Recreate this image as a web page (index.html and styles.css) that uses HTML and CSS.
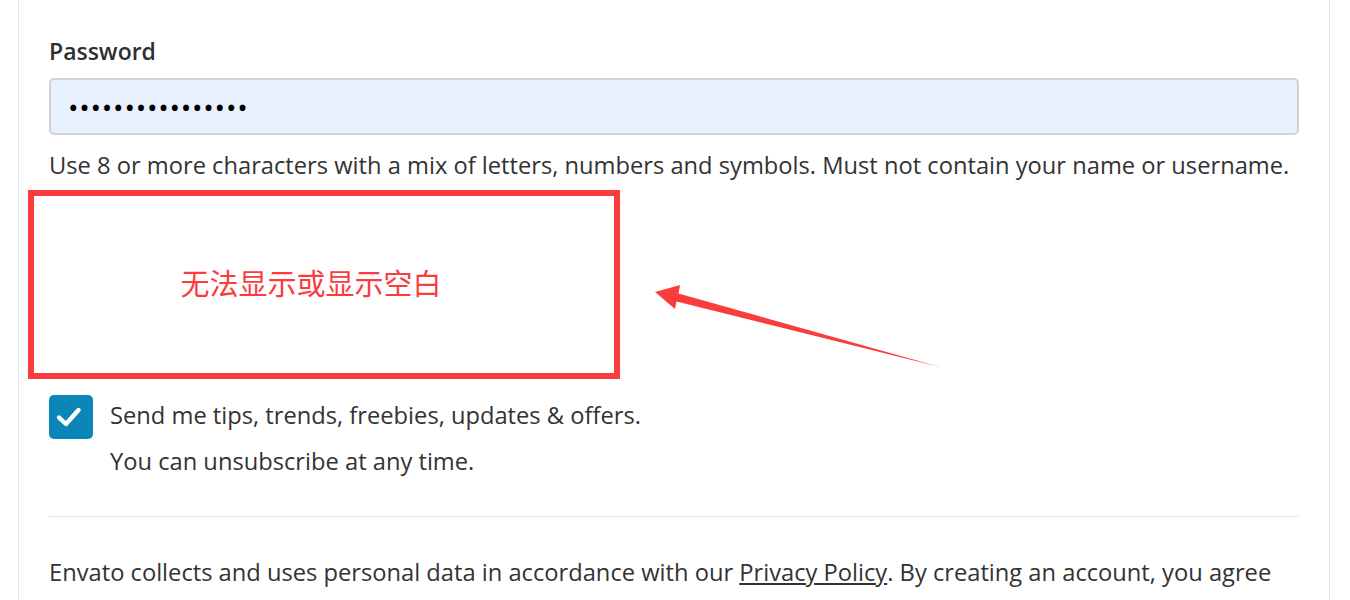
FILE: index.html
```html
<!DOCTYPE html>
<html lang="en">
<head>
<meta charset="UTF-8">
<meta name="viewport" content="width=device-width, initial-scale=1.0">
<title>Create account</title>
<link rel="stylesheet" href="styles.css">
</head>
<body>

<div class="page">
    <div class="card">
        <label class="field-label" for="password">Password</label>
        <input type="text" id="password" class="field-input" value="••••••••••••••••">
        <p class="field-hint">Use 8 or more characters with a mix of letters, numbers and symbols. Must not contain your name or username.</p>

        <!-- annotation: this area renders blank -->
        <div class="note-box">
            <span class="note-text">无法显示或显示空白</span>
        </div>

        <div class="opt-in">
            <span class="check-box">
                <svg width="44" height="44" viewBox="0 0 44 44"><path d="M10 22.5 L17 29 L29.5 15" fill="none" stroke="#fff" stroke-width="4.4" stroke-linecap="round" stroke-linejoin="round"/></svg>
            </span>
            <div class="opt-in-text">
                <p>Send me tips, trends, freebies, updates &amp; offers.</p>
                <p>You can unsubscribe at any time.</p>
            </div>
        </div>

        <hr class="divider">

        <p class="legal">Envato collects and uses personal data in accordance with our <a href="#">Privacy Policy</a>. By creating an account, you agree</p>
    </div>

    <svg class="note-arrow" width="1350" height="600" viewBox="0 0 1350 600">
        <polygon points="655,292 680,285 678.5,293.6 940,367 676.5,301.4 675,309" fill="#fa3c3c"/>
    </svg>
</div>

</body>
</html>
```

FILE: styles.css
```css
/* Global styles */
body {
    font-family: "Open Sans", "Noto Sans", Arial, sans-serif;
    margin: 0;
    padding: 0;
    color: #333;
    background: #fff;
}
.page {
    position: relative;
    height: 600px;
    overflow: hidden;
}
.card {
    margin-left: 18px;
    width: 1250px;
    padding: 36px 30px 0 30px;
    border-left: 1px solid #e4e8eb;
    border-right: 1px solid #e4e8eb;
    height: 600px;
}
.field-label {
    display: block;
    font-size: 23px;
    font-weight: 600;
    line-height: 30px;
    color: #2f2f2f;
}
.field-input {
    display: block;
    box-sizing: border-box;
    width: 100%;
    height: 57px;
    margin-top: 12px;
    padding: 0 17px;
    border: 2px solid #d2d2d2;
    border-radius: 5px;
    background: #e8f0fe;
    font-family: inherit;
    font-size: 28px;
    letter-spacing: 0.75px;
    color: #000;
}
.field-hint {
    margin: 15px 0 0 0;
    font-size: 23.7px;
    line-height: 30px;
}
.note-box {
    box-sizing: border-box;
    width: 592px;
    height: 189px;
    margin: 10px 0 0 -21px;
    padding: 0 26px 6px 0;
    border: 6px solid #fa3c3c;
    display: flex;
    align-items: center;
    justify-content: center;
}
.note-text {
    font-family: "Noto Sans CJK SC", sans-serif;
    font-size: 29px;
    color: #fa3c3c;
}
.opt-in {
    display: flex;
    gap: 17px;
    margin-top: 16px;
}
.check-box {
    flex: none;
    width: 44px;
    height: 44px;
    border-radius: 5px;
    background: #0a86b8;
}
.check-box svg {
    display: block;
}
.opt-in-text p {
    margin: 5px 0 0 0;
    font-size: 23.7px;
    line-height: 30px;
}
.opt-in-text p + p {
    margin-top: 16px;
}
.divider {
    border: 0;
    border-top: 1px solid #e5e5e5;
    margin: 40px 0 0 0;
}
.legal {
    margin: 40px 0 0 0;
    font-size: 23.7px;
    line-height: 30px;
}
.legal a {
    color: #333;
}
.note-arrow {
    position: absolute;
    left: 0;
    top: 0;
    pointer-events: none;
}
```
